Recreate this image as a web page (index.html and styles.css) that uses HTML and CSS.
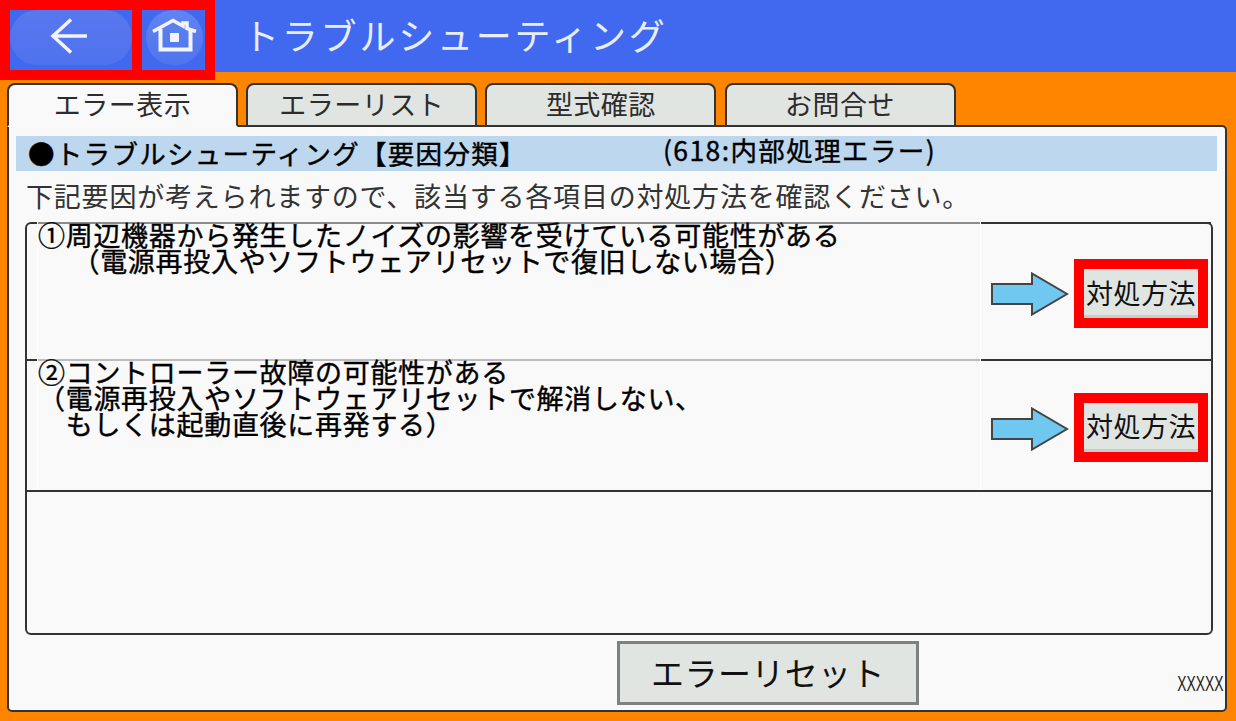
FILE: index.html
```html
<!DOCTYPE html>
<html lang="ja">
<head>
    <meta charset="UTF-8">
    <meta name="viewport" content="width=device-width, initial-scale=1.0">
    <title>トラブルシューティング</title>
    <link rel="stylesheet" href="styles.css">
</head>
<body>
    <header class="top-bar">
        <nav class="nav-group">
            <button class="nav-btn back-btn" aria-label="戻る">
                <svg width="122" height="60" viewBox="0 0 122 60">
                    <path d="M77 26H43M61 9.500L43 26L61 42.500" fill="none" stroke="#f2f5ff" stroke-width="3.500"/>
                </svg>
            </button>
            <button class="nav-btn home-btn" aria-label="ホーム">
                <svg width="63" height="60" viewBox="0 0 63 60">
                    <path d="M11 21.500L31 10.500L41 16V13H45V18.500L54 21.500" fill="none" stroke="#f2f5ff" stroke-width="3.500"/>
                    <path d="M18.500 19V39.500H48.500V19" fill="none" stroke="#f2f5ff" stroke-width="4"/>
                    <rect x="28" y="23" width="9" height="9" fill="#f2f5ff"/>
                </svg>
            </button>
        </nav>
        <h1 class="page-title">トラブルシューティング</h1>
    </header>

    <div class="tabs">
        <div class="tab active">エラー表示</div>
        <div class="tab">エラーリスト</div>
        <div class="tab">型式確認</div>
        <div class="tab">お問合せ</div>
    </div>

    <main class="panel">
        <div class="section-bar">
            <span class="section-name">●トラブルシューティング【要因分類】</span>
            <span class="section-code">(618:内部処理エラー)</span>
        </div>
        <p class="lead">下記要因が考えられますので、該当する各項目の対処方法を確認ください。</p>

        <div class="cause-box">
            <div class="cause-row first-row">
                <div class="cause-text">①周辺機器から発生したノイズの影響を受けている可能性がある
　 （電源再投入やソフトウェアリセットで復旧しない場合）</div>
                <div class="cause-action">
                    <svg class="arrow" width="78" height="44" viewBox="0 0 78 44">
                        <path d="M1 12H41V1.500L76 22L41 42.500V32H1Z" fill="#70c8f0" stroke="#444" stroke-width="2"/>
                    </svg>
                    <button class="fix-btn">対処方法</button>
                </div>
            </div>
            <div class="cause-row second-row">
                <div class="cause-text">②コントローラー故障の可能性がある
（電源再投入やソフトウェアリセットで解消しない、
　もしくは起動直後に再発する）</div>
                <div class="cause-action">
                    <svg class="arrow" width="78" height="44" viewBox="0 0 78 44">
                        <path d="M1 12H41V1.500L76 22L41 42.500V32H1Z" fill="#70c8f0" stroke="#444" stroke-width="2"/>
                    </svg>
                    <button class="fix-btn">対処方法</button>
                </div>
            </div>
        </div>

        <div class="panel-footer">
            <button class="reset-btn">エラーリセット</button>
            <span class="version">XXXXX</span>
        </div>
    </main>
</body>
</html>
```

FILE: styles.css
```css
:root {
    --blue: #4169f0;
    --orange: #ff8400;
    --panel: #f9f9f9;
    --line: #333333;
    --button: #e0e5e2;
    --red: #ff0000;
}

* {
    margin: 0;
    padding: 0;
    box-sizing: border-box;
}

body {
    width: 1236px;
    height: 721px;
    overflow: hidden;
    background-color: var(--orange);
    font-family: "Noto Sans CJK JP", "Noto Sans", sans-serif;
    color: #111111;
}

button {
    font-family: inherit;
}

.top-bar {
    display: flex;
    align-items: flex-start;
    height: 72px;
    background-color: var(--blue);
}

.nav-group {
    display: flex;
    gap: 10px;
    width: 215px;
    height: 80px;
    padding: 10px;
    background-color: var(--red);
    flex-shrink: 0;
}

.nav-btn {
    display: block;
    height: 60px;
    border: none;
    background-color: var(--blue);
    position: relative;
}

.nav-btn svg {
    position: relative;
    display: block;
}

.nav-btn::before {
    content: "";
    position: absolute;
    top: 0;
    left: 0;
    right: 0;
    height: 55px;
    border-radius: 28px;
    background: linear-gradient(#5878ef, #4f72ee);
}

.back-btn {
    width: 122px;
}

.home-btn {
    width: 63px;
}

.home-btn::before {
    left: 4px;
    right: 2px;
    background: linear-gradient(#6084f2, #4f74ee);
}

.page-title {
    margin-left: 28px;
    font-size: 36px;
    font-weight: 400;
    line-height: 68px;
    letter-spacing: 2.800px;
    color: #e8edfc;
}

.tabs {
    display: flex;
    gap: 8.200px;
    margin: 11px 0 -2px 7px;
    position: relative;
}

.tab {
    width: 231px;
    height: 44px;
    border: 2px solid var(--line);
    border-radius: 8px 8px 0 0;
    background-color: var(--button);
    font-size: 27px;
    line-height: 37px;
    letter-spacing: 0.500px;
    text-align: center;
    color: #2c2c2c;
}

.tab.active {
    background-color: var(--panel);
    border-bottom-color: var(--panel);
    position: relative;
    z-index: 1;
}

.panel {
    height: 587px;
    margin: 0 9px 0 7px;
    padding: 9px 8px 0 7px;
    border: 2px solid var(--line);
    border-radius: 0 5px 5px 5px;
    background-color: var(--panel);
}

.section-bar {
    display: flex;
    height: 35px;
    padding-left: 12px;
    background-color: #bdd7ee;
    font-size: 26.500px;
    line-height: 34px;
    white-space: nowrap;
    -webkit-text-stroke: 0.4px #000000;
    color: #000000;
}

.section-name {
    width: 635px;
    letter-spacing: 1.300px;
}

.section-code {
    letter-spacing: 1.400px;
    line-height: 28px;
}

.lead {
    padding-left: 10px;
    font-size: 27px;
    line-height: 50px;
    letter-spacing: 0.800px;
    color: #333333;
    white-space: nowrap;
}

.cause-box {
    height: 413px;
    margin: 1px 4px 0 9px;
    border: 2px solid var(--line);
    border-radius: 6px;
}

.cause-row {
    display: grid;
    grid-template-columns: 10px 944px 1fr;
    margin-top: -2px;
}

.first-row {
    height: 139px;
}

.second-row {
    height: 133px;
    border-bottom: 2px solid var(--line);
}

.cause-row::before {
    content: "";
    border-top: 2px solid transparent;
}

.second-row::before {
    border-top-color: var(--line);
}

.cause-text {
    box-shadow: inset 0 2px 0 #8c8c8c;
    border-left: 1px solid #ffffff;
    border-right: 1px solid #ffffff;
    font-size: 27px;
    line-height: 26px;
    letter-spacing: 0.700px;
    white-space: pre;
    -webkit-text-stroke: 0.4px #000000;
    color: #000000;
}

.second-row .cause-text {
    box-shadow: inset 0 2px 0 #bcbcbc;
}

.cause-action {
    display: flex;
    align-items: center;
    gap: 5px;
    padding: 2px 0 0 10px;
    border-top: 2px solid var(--line);
}

.second-row .cause-action {
    padding-top: 3px;
}

.second-row .arrow {
    margin-top: 4px;
}

.fix-btn {
    width: 134px;
    height: 69px;
    padding-bottom: 3px;
    border: 10px solid var(--red);
    background-color: var(--button);
    box-shadow: inset 0 -3px 0 #c9cdca;
    font-size: 27px;
    letter-spacing: 0.500px;
    color: #111111;
    white-space: nowrap;
}

.panel-footer {
    display: flex;
    position: relative;
    margin-top: 6px;
    padding-left: 601px;
}

.reset-btn {
    width: 302px;
    height: 64px;
    padding-bottom: 3px;
    border: 3px solid #808080;
    background-color: var(--button);
    font-size: 33px;
    letter-spacing: 0.400px;
    color: #111111;
}

.version {
    position: absolute;
    right: -6px;
    bottom: 11px;
    font-family: "Liberation Sans", sans-serif;
    font-size: 22px;
    line-height: 20px;
    color: #222222;
    transform: scaleX(0.63);
    transform-origin: right center;
}
```
